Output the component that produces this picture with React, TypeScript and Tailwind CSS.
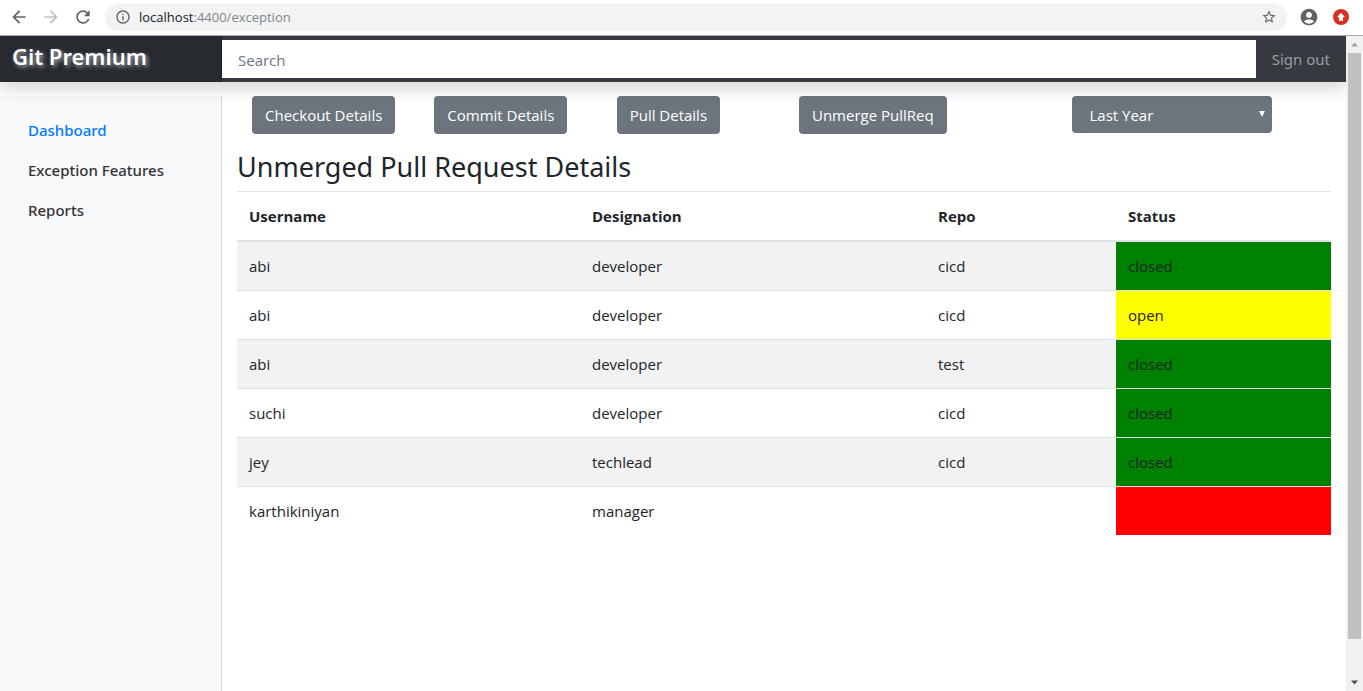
import {
  MdAccountCircle,
  MdArrowBack,
  MdArrowForward,
  MdInfoOutline,
  MdRefresh,
  MdStarBorder,
} from 'react-icons/md';

type Status = 'closed' | 'open' | '';

interface PullRequest {
  username: string;
  designation: string;
  repo: string;
  status: Status;
}

const pullRequests: PullRequest[] = [
  { username: 'abi', designation: 'developer', repo: 'cicd', status: 'closed' },
  { username: 'abi', designation: 'developer', repo: 'cicd', status: 'open' },
  { username: 'abi', designation: 'developer', repo: 'test', status: 'closed' },
  { username: 'suchi', designation: 'developer', repo: 'cicd', status: 'closed' },
  { username: 'jey', designation: 'techlead', repo: 'cicd', status: 'closed' },
  { username: 'karthikiniyan', designation: 'manager', repo: '', status: '' },
];

const statusColor: Record<Status, string> = {
  closed: 'bg-[#008000]',
  open: 'bg-[#ffff00]',
  '': 'bg-[#ff0000]',
};

const columns = [
  { name: 'Username', width: 'w-[343px]' },
  { name: 'Designation', width: 'w-[346px]' },
  { name: 'Repo', width: 'w-[190px]' },
  { name: 'Status', width: 'w-[215px]' },
];

const actions = ['Checkout Details', 'Commit Details', 'Pull Details', 'Unmerge PullReq'];

const links = ['Dashboard', 'Exception Features', 'Reports'];

function BrowserBar() {
  return (
    <div className="flex h-9 shrink-0 items-center border-b border-[#a9abae] bg-white pb-px pr-3.5 pl-[9px] text-[#5f6368]">
      <div className="flex items-center gap-3 pr-3">
        <button type="button" aria-label="Back">
          <MdArrowBack className="size-5" />
        </button>
        <button type="button" aria-label="Forward" className="text-[#bdc1c6]">
          <MdArrowForward className="size-5" />
        </button>
        <button type="button" aria-label="Reload">
          <MdRefresh className="size-5" />
        </button>
      </div>
      <div className="flex h-7 min-w-0 flex-1 items-center rounded-full bg-[#f1f3f4] px-2.5">
        <MdInfoOutline className="size-4 shrink-0" />
        <div className="ml-2 min-w-0 flex-1 truncate pt-0.5 text-[13px] text-[#80868b]">
          <span className="text-[#202124]">localhost</span>:4400/exception
        </div>
        <button type="button" aria-label="Bookmark">
          <MdStarBorder className="size-4" />
        </button>
      </div>
      <div className="flex items-center gap-3.5 pl-3">
        <button type="button" aria-label="Profile">
          <MdAccountCircle className="size-5" />
        </button>
        <button type="button" aria-label="Update">
          <svg viewBox="0 0 16 16" className="size-4">
            <circle cx="8" cy="8" r="8" fill="#d93025" />
            <path d="M8 3.8 12 8.2H10v3.6H6V8.2H4z" fill="#fff" />
          </svg>
        </button>
      </div>
    </div>
  );
}

function TopNav() {
  return (
    <header className="relative z-10 flex h-[46px] shrink-0 items-center bg-[#343a40] shadow-[0_8px_16px_rgba(0,0,0,0.15)]">
      <a
        href="#"
        className="h-full w-[222px] shrink-0 bg-black/25 pl-3 font-['Noto_Sans','Open_Sans',sans-serif] text-[22px] leading-[40px] font-semibold text-white shadow-[inset_-1px_0_0_rgba(0,0,0,0.25)] [text-shadow:2px_2px_4px_rgba(255,255,255,0.6)]"
      >
        Git Premium
      </a>
      <input
        type="text"
        placeholder="Search"
        aria-label="Search"
        className="h-[38px] min-w-0 flex-1 bg-white px-4 pt-0.5 text-[15px] text-[#495057] placeholder:text-[#6c757d]"
      />
      <a href="#" className="px-4 font-['Noto_Sans','Open_Sans',sans-serif] text-[15px] text-white/50">
        Sign out
      </a>
    </header>
  );
}

function Sidebar() {
  return (
    <nav className="w-[222px] shrink-0 border-r border-[#dcdddf] bg-[#f8f9fa] pt-3.5 pl-3">
      <ul className="font-['Noto_Sans','Open_Sans',sans-serif] text-[15px] leading-6 font-medium">
        {links.map((link) => (
          <li key={link}>
            <a
              href="#"
              className={
                link === 'Dashboard' ? 'block px-4 py-2 text-[#007bff]' : 'block px-4 py-2 text-[#333]'
              }
            >
              {link}
            </a>
          </li>
        ))}
      </ul>
    </nav>
  );
}

function Toolbar() {
  return (
    <div className="grid grid-cols-12">
      {actions.map((action) => (
        <div key={action} className="col-span-2 px-[15px]">
          <button
            type="button"
            className="h-[38px] rounded bg-[#6c757d] px-[13px] text-[15px] whitespace-nowrap text-white"
          >
            {action}
          </button>
        </div>
      ))}
      <div className="col-span-3 col-start-10 px-[15px]">
        <div className="relative w-[200px]">
          <select
            aria-label="Period"
            className="h-[37px] w-full appearance-none rounded bg-[#6c757d] px-[17px] pt-0.5 text-[15px] text-white"
          >
            <option>Last Year</option>
          </select>
          <svg
            viewBox="0 0 6 6"
            className="pointer-events-none absolute top-[15px] right-[7px] size-[6px]"
          >
            <path d="M0 0h6L3 6z" fill="#fff" />
          </svg>
        </div>
      </div>
    </div>
  );
}

function PullRequestTable() {
  return (
    <table className="w-full table-fixed border-separate border-spacing-0 text-left text-[15px] leading-6">
      <thead>
        <tr>
          {columns.map((column) => (
            <th
              key={column.name}
              className={`${column.width} border-t border-b-2 border-[#dee2e6] p-3 font-bold`}
            >
              {column.name}
            </th>
          ))}
        </tr>
      </thead>
      <tbody className="[&>tr+tr>td]:border-t">
        {pullRequests.map((row, index) => (
          <tr key={index} className="h-12 odd:bg-[#f2f2f2] [&>td]:border-[#dee2e6]">
            <td className="p-3">{row.username}</td>
            <td className="p-3">{row.designation}</td>
            <td className="p-3">{row.repo}</td>
            <td className={`${statusColor[row.status]} p-3`}>{row.status}</td>
          </tr>
        ))}
      </tbody>
    </table>
  );
}

function ScrollBar() {
  return (
    <div className="flex w-[17px] shrink-0 flex-col items-center bg-[#f1f1f1]" aria-hidden="true">
      <div className="flex h-[17px] items-center">
        <svg viewBox="0 0 7 4" className="size-[7px]">
          <path d="M0 4 3.5 0 7 4z" fill="#a3a3a3" />
        </svg>
      </div>
      <div className="min-h-0 w-[13px] flex-[586] bg-[#c1c1c1]" />
      <div className="flex-[35]" />
      <div className="flex h-[17px] items-center">
        <svg viewBox="0 0 7 4" className="size-[7px]">
          <path d="M0 0h7L3.5 4z" fill="#505050" />
        </svg>
      </div>
    </div>
  );
}

export default function App() {
  return (
    <div className="flex h-screen flex-col bg-white font-['Open_Sans','Noto_Sans',sans-serif] text-[#212529]">
      <BrowserBar />
      <div className="flex min-h-0 flex-1">
        <div className="flex min-w-0 flex-1 flex-col overflow-hidden">
          <TopNav />
          <div className="flex min-h-0 flex-1 pt-3.5">
            <Sidebar />
            <main className="min-w-0 flex-1 px-[15px]">
              <Toolbar />
              <h2 className="mt-4 mb-2 font-['Noto_Sans','Open_Sans',sans-serif] text-[27px] leading-[33px]">
                Unmerged Pull Request Details
              </h2>
              <PullRequestTable />
            </main>
          </div>
        </div>
        <ScrollBar />
      </div>
    </div>
  );
}
